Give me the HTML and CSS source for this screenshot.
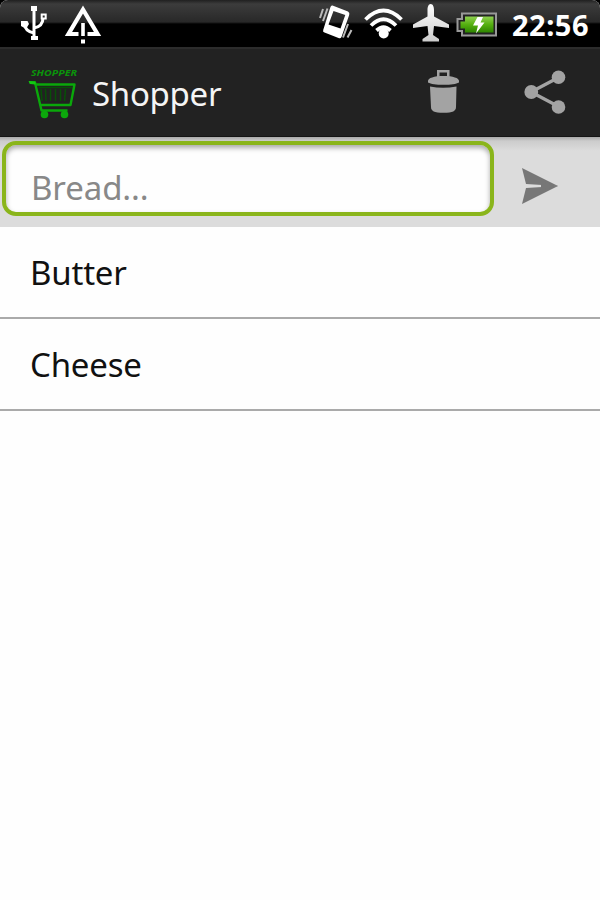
FILE: index.html
```
<!DOCTYPE html>
<html lang="en">
<head>
    <meta charset="UTF-8">
    <meta name="viewport" content="width=device-width, initial-scale=1.0">
    <title>Shopper</title>
    <link rel="stylesheet" href="styles.css">
</head>
<body>
    <!-- Status bar -->
    <div class="status-bar">
        <div class="status-left">
            <svg width="120" height="47" viewBox="0 0 120 47">
                <!-- USB -->
                <g fill="none" stroke="#fff" stroke-width="3">
                    <path d="M34 7v31M34 33c-5-1-9-3-9-8M34 28c5-1 9-4 9-10"/>
                    <rect x="41.700" y="14.500" width="4" height="4" stroke-width="2"/>
                </g>
                <path fill="#fff" d="M31 6h6v5h-6zM31 36h7v4h-7z"/>
                <path fill="#fff" d="M21 21h6.500l1.500 3-3 5-5-3z"/>
                <!-- Debugging warning -->
                <path fill="none" stroke="#fff" stroke-width="4.200" d="M78.500 34H68.500L83 9.500 97.500 34H87.500"/>
                <path fill="#fff" d="M81.200 23h3.600v13h-3.600zM81 39.500h4v4h-4z"/>
            </svg>
        </div>
        <div class="status-right">
            <svg width="190" height="47" viewBox="314 0 190 47">
                <defs>
                    <linearGradient id="battery" x1="0" y1="0" x2="0" y2="1">
                        <stop offset="0" stop-color="#8fd050"/>
                        <stop offset=".5" stop-color="#55b010"/>
                        <stop offset="1" stop-color="#2d8500"/>
                    </linearGradient>
                    <linearGradient id="plane" x1="0" y1="0" x2="0" y2="1">
                        <stop offset="0" stop-color="#fff"/>
                        <stop offset="1" stop-color="#ccc"/>
                    </linearGradient>
                </defs>
                <!-- Vibrate -->
                <path fill="#fff" fill-rule="evenodd" d="M332.500 5.500L348 11.500Q350 12.500 349.200 15L341.500 37Q340.500 39 338.500 38L324.500 32.500Q322.500 32 323.200 30L330.300 7.500Q331 5 332.500 5.500zM333.500 11L328.500 24.500L340.500 28.500L345.300 15z"/>
                <path fill="none" stroke="#bbb" stroke-width="2" d="M323 9l-3 9M327.500 8.500l-4.500 12.500M343 37.500l5-13.500M347.500 37.500l4-7.500"/>
                <!-- Wifi -->
                <g fill="none" stroke="#fff" stroke-width="3.800">
                    <path d="M365.500 19.500Q383.500 1.500 401.500 19.500"/>
                    <path d="M371 25.500Q383.500 13 396 25.500"/>
                    <path d="M376.500 30.500Q383.500 24 390.500 30.500"/>
                </g>
                <circle cx="383.700" cy="33.500" r="5" fill="#fff"/>
                <!-- Airplane mode -->
                <path fill="url(#plane)" d="M430.700 4C433 4 434 7 434 10v6.500l15 8v3.500l-15-2-1 9 6 4v2.500h-16.500V39l6-4-1-9-14.500 2v-3.500l14.500-8V10c0-3 1-6 3.200-6z"/>
                <!-- Battery -->
                <path fill="#222" stroke="#999" stroke-width="2" d="M462 13.500h34v22h-34v-4.500h-4.500V19h4.500z"/>
                <path fill="url(#battery)" d="M465 16.500h28.500v16H465v-4h-4.500v-7h4.500z"/>
                <path fill="#fff" d="M477.500 17h5.500l-2.500 5.500h4l-8.500 11 2-8h-5z"/>
            </svg>
            <span class="clock">22:56</span>
        </div>
    </div>

    <!-- Action bar -->
    <div class="action-bar">
        <svg class="logo" width="54" height="54" viewBox="26 64 54 54">
            <text x="31" y="74" class="logo-text" textLength="46" lengthAdjust="spacingAndGlyphs">SHOPPER</text>
            <g fill="none" stroke="#0aa80a" stroke-width="2.400" stroke-linejoin="round">
                <path d="M29.500 80.500h5.500L41.500 108.500h26"/>
                <path d="M35 82.500h39.500L70.500 103H40"/>
                <path stroke="#075007" stroke-width="1.500" d="M41 87l1 12M45.500 87l.5 12M50.500 87v12M55.500 87v12M60.500 87v12M65.500 87l-1 12M39 85.500h33"/>
            </g>
            <path fill="#12ca12" d="M28.500 79l7 .5v3l-5.500-.5z"/>
            <circle cx="44.500" cy="112.500" r="3.800" fill="#0ca80c"/>
            <circle cx="64.500" cy="112.500" r="3.800" fill="#0ca80c"/>
        </svg>
        <h1 class="title">Shopper</h1>
        <button class="action trash" aria-label="Clear list">
            <svg width="34" height="46" viewBox="426 70 34 46" fill="#a3a3a3">
                <path fill-rule="evenodd" d="M437 70h12.500v7H437zM439.500 72.500v4.500h7.500v-4.500z"/>
                <path d="M428 81c0-3 6-5 15.500-5S459 78 459 81v1.500c-3 1.800-8 2.300-15.500 2.300S431 84.300 428 82.500z"/>
                <path d="M430 86.500q13 2.500 26.500 0l-.5 20.500c0 4-3 5.800-12.500 5.800S431 111 431 107z"/>
            </svg>
        </button>
        <button class="action share" aria-label="Share">
            <svg width="44" height="46" viewBox="523 70 44 46">
                <path d="M558.500 77.500L531 92l27.500 14.500" fill="none" stroke="#a3a3a3" stroke-width="3.300"/>
                <g fill="#a3a3a3">
                    <circle cx="558.500" cy="77.300" r="6.800"/>
                    <circle cx="531.300" cy="92" r="6.900"/>
                    <circle cx="558.500" cy="107" r="6.800"/>
                </g>
            </svg>
        </button>
    </div>

    <!-- New item -->
    <form class="add-row">
        <input class="add-input" type="text" placeholder="Bread...">
        <button class="send" type="button" aria-label="Add">
            <svg width="36" height="36" viewBox="522 168 36 36">
                <path fill="#777" d="M522 168L558 186L526 184z"/>
                <path fill="#777" d="M522 204L558 186L526 188z"/>
                <path fill="#777" d="M541 182l17 4-17 4z"/>
            </svg>
        </button>
    </form>

    <!-- Shopping list -->
    <ul class="list">
        <li class="item">Butter</li>
        <li class="item">Cheese</li>
    </ul>
</body>
</html>
```
FILE: styles.css
```
* {
    box-sizing: border-box;
}

body {
    margin: 0;
    min-height: 900px;
    background: #fefefe;
    color: #111;
    font-family: "Noto Sans", sans-serif;
}

svg {
    display: block;
}

button {
    padding: 0;
    border: 0;
    background: none;
}

.status-bar {
    display: flex;
    justify-content: space-between;
    height: 47px;
    background: linear-gradient(#202020 0, #3c3c3c 4px, #282828 22px, #000 24px, #000 100%);
    border-radius: 8px 8px 0 0;
    box-shadow: 0 -10px 0 #000;
}

.status-right {
    display: flex;
    align-items: center;
}

.clock {
    width: 96px;
    padding: 1px 0 0 8px;
    color: #fff;
    font-size: 29px;
    font-weight: 700;
    letter-spacing: 0.5px;
    line-height: 47px;
}

.action-bar {
    display: flex;
    align-items: center;
    height: 90px;
    padding: 0 33px 0 26px;
    background: #222;
    border-top: 2px solid #2c2c2c;
    border-bottom: 1px solid #151515;
}

.logo-text {
    fill: #0b930b;
    font-size: 9px;
    font-style: italic;
    font-weight: 700;
}

.title {
    flex: 1;
    margin: 1px 0 0 12px;
    color: #f5f5f5;
    font-size: 33px;
    font-weight: 400;
    letter-spacing: -0.3px;
}

.share {
    margin-left: 63px;
}

.add-row {
    display: flex;
    align-items: flex-start;
    height: 90px;
    padding: 4px 0 0 2px;
    background: linear-gradient(#aaa 0, #ccc 4px, #dcdcdc 14px);
}

.add-input {
    width: 492px;
    height: 75px;
    padding: 17px 25px 0;
    border: 4px solid #8ab51b;
    border-radius: 14px;
    outline: 0;
    background: #fefefe;
    box-shadow: inset 0 3px 5px #aaa;
    font: 33px "Noto Sans", sans-serif;
    letter-spacing: -0.1px;
}

.add-input::placeholder {
    color: #888;
}

.send {
    margin: 27px 0 0 28px;
}

.list {
    margin: 0;
    padding: 0;
    list-style: none;
}

.item {
    height: 92px;
    padding-left: 30px;
    border-bottom: 2px solid #aaa;
    font-size: 33px;
    letter-spacing: -0.2px;
    line-height: 92px;
}
```
